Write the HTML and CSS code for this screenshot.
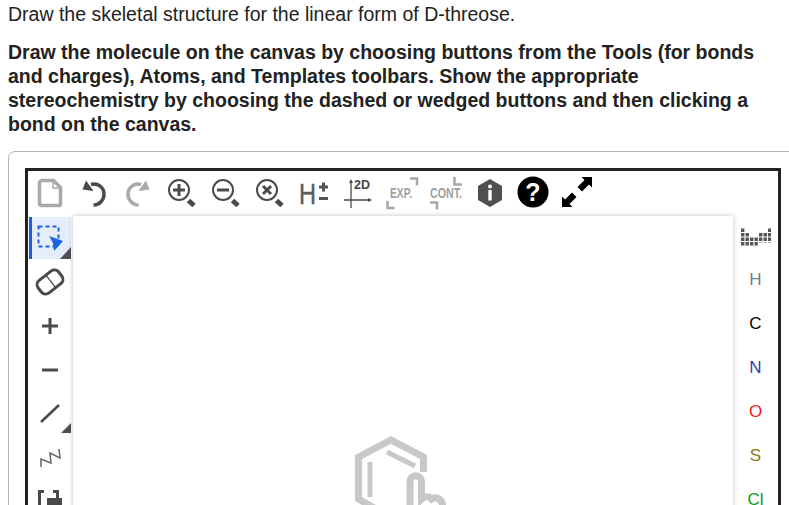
FILE: index.html
```html
<!DOCTYPE html>
<html lang="en">
<head>
<meta charset="utf-8">
<title>Draw the skeletal structure</title>
<link rel="stylesheet" href="styles.css">
</head>
<body>
<main class="page">
  <p class="lead">Draw the skeletal structure for the linear form of D-threose.</p>
  <p class="instructions">Draw the molecule on the canvas by choosing buttons from the Tools (for bonds and charges), Atoms, and Templates toolbars. Show the appropriate stereochemistry by choosing the dashed or wedged buttons and then clicking a bond on the canvas.</p>
  <section class="card">
    <div class="editor">
      <div class="topbar">
        <svg class="btn" viewBox="0 0 44 46"><path class="s-grey heavy" d="M11.500 12a2.500 2.500 0 0 1 2.500-2.500h11.500l7 7v17a1 1 0 0 1-1 1h-18a2 2 0 0 1-2-2z"/><path class="s-grey thin" d="M25 10v7h7"/></svg>
        <svg class="btn" viewBox="0 0 44 46"><path class="s-dark heavy" d="M19 13.500c7-2 13 3 13 9.500 0 6-4.500 11-10.500 11"/><path class="f-dark" d="M14 9.500l-3.500 9 11 1.500z"/></svg>
        <svg class="btn" viewBox="0 0 44 46"><path class="s-grey heavy" d="M25 13.500c-7-2-13 3-13 9.500 0 6 4.500 11 10.500 11"/><path class="f-grey" d="M30 9.500l3.500 9-11 1.500z"/></svg>
        <svg class="btn" viewBox="0 0 44 46"><circle class="s-dark lens" cx="19" cy="19" r="10"/><path class="s-dark" d="M13 19h12M19 13v12"/><path class="s-dark handle" d="M28.500 29.500l5.500 5"/></svg>
        <svg class="btn" viewBox="0 0 44 46"><circle class="s-dark lens" cx="19" cy="19" r="10"/><path class="s-dark" d="M13 19h12"/><path class="s-dark handle" d="M28.500 29.500l5.500 5"/></svg>
        <svg class="btn" viewBox="0 0 44 46"><circle class="s-dark lens" cx="19" cy="19" r="10"/><path class="s-dark" d="M15 15l8 8M23 15l-8 8"/><path class="s-dark handle" d="M28.500 29.500l5.500 5"/></svg>
        <svg class="btn" viewBox="0 0 44 46"><text class="t-h" x="7" y="33" textLength="17" lengthAdjust="spacingAndGlyphs">H</text><path class="s-mid" d="M27 16h9M31.500 11.500v9M27 27.500h9"/></svg>
        <svg class="btn" viewBox="0 0 44 46"><path class="s-dark hair" d="M15 10v27M8 29h27"/><path class="f-dark" d="M15 8l-2 4h4zM36 29l-4-2v4z"/><text class="t-2d" x="18" y="18">2D</text></svg>
        <svg class="btn" viewBox="0 0 44 46"><text class="t-exp" x="10" y="27" textLength="22" lengthAdjust="spacingAndGlyphs">EXP.</text><path class="s-pale" d="M30 7.500h7v7M7.500 30v7h7"/></svg>
        <svg class="btn" viewBox="0 0 44 46"><text class="t-exp" x="6" y="27" textLength="32" lengthAdjust="spacingAndGlyphs">CONT.</text><path class="s-pale" d="M30.500 6v7.500h7.500M6 31.500h7v7"/></svg>
        <svg class="btn" viewBox="0 0 44 46"><path class="f-mid" d="M22 8l12 7v14l-12 7-12-7V15z"/><circle class="f-white" cx="22" cy="15.500" r="2"/><rect class="f-white" x="20.300" y="19" width="3.400" height="10.500"/></svg>
        <svg class="btn" viewBox="0 0 44 46"><circle class="f-black" cx="21" cy="21" r="15.500"/><text class="t-q" x="21" y="29.500">?</text></svg>
        <svg class="btn" viewBox="0 0 44 46"><path class="f-black" d="M36 6v10.500l-3-3-7 7-4.500-4.500 7-7-3-3zM6 36V25.500l3 3 7-7 4.500 4.500-7 7 3 3z"/></svg>
      </div>
      <div class="workspace">
        <div class="tools">
          <div class="tool active">
            <svg class="tool-icon" viewBox="0 0 39 42"><rect class="dash" x="6.500" y="9.500" width="20" height="20"/><path class="f-blue" d="M17 19l14 5-9 10-1-8z"/><path class="f-mid" d="M39 30v12H28z"/></svg>
          </div>
          <svg class="btn-tool" viewBox="0 0 44 44"><g transform="rotate(-38 22 22)"><rect class="s-dark eraser" x="9" y="14" width="26" height="16" rx="5.500"/><path class="s-dark hair" d="M23 14v16"/></g></svg>
          <svg class="btn-tool" viewBox="0 0 44 44"><path class="s-dark" d="M14 22h16M22 14v16"/></svg>
          <svg class="btn-tool" viewBox="0 0 44 44"><path class="s-dark" d="M14 22h16"/></svg>
          <svg class="btn-tool" viewBox="0 0 44 44"><path class="s-dark bond" d="M13 30l18-17"/><path class="f-mid" d="M43 31v10H33z"/></svg>
          <svg class="btn-tool" viewBox="0 0 44 44"><path class="zig" d="M13 31v-8l10 4-1-10 10 5-1-9"/></svg>
          <svg class="btn-tool" viewBox="0 0 44 44"><path class="s-dark" d="M16 11.500h-4.500V28M25 11.500h4.500V19"/><rect class="f-dark" x="19" y="18" width="15" height="14"/></svg>
        </div>
        <div class="canvas">
          <svg class="logo" viewBox="0 0 100 80"><path class="logo-line" d="M73.500 37V22L41 5 8.500 22v42L26 74"/><path class="logo-thin" d="M37 17l28 14"/><path class="logo-thin" d="M20 27v35"/><path class="logo-line" d="M60 80V46.500a5.750 5.750 0 0 1 11.500 0V64c3-3 8-3 10 0 3-2 9-2 11 5v11"/></svg>
        </div>
        <div class="atoms">
          <svg class="table-icon" viewBox="0 0 30 18"><path class="cells" d="M1.700 .5V18M6.200 5v13M10.700 9.500V18M15.200 9.500V18M19.700 5v9.500M24.200 5v9.500M28.700 .5v14"/></svg>
          <span class="atom a-h">H</span>
          <span class="atom a-c">C</span>
          <span class="atom a-n">N</span>
          <span class="atom a-o">O</span>
          <span class="atom a-s">S</span>
          <span class="atom a-cl">Cl</span>
        </div>
      </div>
    </div>
  </section>
</main>
</body>
</html>
```
FILE: styles.css
```css
html, body {
  margin: 0;
  height: 505px;
  overflow: hidden;
  background: #fff;
}
body {
  font-family: "Liberation Sans", Arial, sans-serif;
  font-size: 19.500px;
  line-height: 24px;
  color: #222;
}
.page {
  padding: 2px 0 0 8px;
}
p {
  margin: 0;
  width: 760px;
}
.lead {
  margin-bottom: 14px;
}
.instructions {
  font-weight: 700;
}
.card {
  width: 800px;
  height: 500px;
  margin-top: 15px;
  padding: 16px;
  box-sizing: border-box;
  border: 1px solid #b3b3b3;
  border-radius: 7px;
}
.editor {
  width: 756px;
  height: 480px;
  box-sizing: border-box;
  border: 3px solid #222;
}
.topbar {
  display: flex;
  height: 45px;
}
.btn {
  flex: none;
  width: 44px;
  height: 46px;
  overflow: visible;
}
.workspace {
  display: grid;
  grid-template-columns: 45px 1fr 45px;
  height: 430px;
}
.tools {
  display: flex;
  flex-direction: column;
}
.tool.active {
  box-sizing: border-box;
  width: 42px;
  height: 42px;
  margin: 1px;
  border-left: 3px solid #1a5fe0;
  background: #e6edfa;
}
.tool-icon {
  display: block;
  width: 39px;
  height: 42px;
}
.btn-tool {
  display: block;
  flex: none;
  width: 44px;
  height: 44px;
}
.canvas {
  display: flex;
  justify-content: center;
  padding-top: 219px;
  box-shadow: 0 0 5px rgba(0, 0, 0, .25);
  background: #fff;
}
.logo {
  flex: none;
  width: 100px;
  height: 80px;
  margin-right: 6px;
}
.atoms {
  display: flex;
  flex-direction: column;
  align-items: center;
}
.table-icon {
  display: block;
  width: 30px;
  height: 18px;
  margin: 12px 0;
}
.atom {
  height: 44px;
  font-size: 17px;
  line-height: 44px;
}
.a-h { color: #6b7f95; }
.a-c { color: #000; }
.a-n { color: #3838b8; }
.a-o { color: #f01818; }
.a-s { color: #8d7a10; }
.a-cl { color: #0c9a20; }

.s-grey, .s-dark, .s-mid, .s-pale, .dash, .zig, .logo-line, .logo-thin, .cells { fill: none; }
.s-grey { stroke: #a9a9a9; stroke-width: 3; }
.s-dark { stroke: #4a4a4a; stroke-width: 3; }
.s-mid { stroke: #555; stroke-width: 3; }
.s-pale { stroke: #a8a8a8; stroke-width: 2.500; }
.heavy { stroke-width: 3.500; }
.thin { stroke-width: 1.500; }
.lens { stroke-width: 2; }
.handle { stroke-width: 5; }
.hair { stroke-width: 1.300; }
.eraser { stroke-width: 3; }
.bond { stroke-width: 2.600; }
.zig { stroke: #666; stroke-width: 1.500; }
.dash { stroke: #1a63e8; stroke-width: 2; stroke-dasharray: 4 3; }
.f-grey { fill: #a9a9a9; }
.f-dark { fill: #4a4a4a; }
.f-mid { fill: #505050; }
.f-white { fill: #fff; }
.f-black { fill: #000; }
.f-blue { fill: #1a63e8; }
.logo-line { stroke: #c8c8c8; stroke-width: 7; }
.logo-thin { stroke: #c8c8c8; stroke-width: 5; }
.cells { stroke: #555; stroke-width: 3.400; stroke-dasharray: 3.400 1.100; }
.t-h { font-size: 29px; fill: #5c5c5c; stroke: #5c5c5c; stroke-width: .5; }
.t-2d { font-size: 12.500px; font-weight: 700; fill: #444; }
.t-exp { font-size: 14px; font-weight: 700; fill: #a0a0a0; }
.t-q { font-size: 25px; font-weight: 700; fill: #fff; text-anchor: middle; }
```
